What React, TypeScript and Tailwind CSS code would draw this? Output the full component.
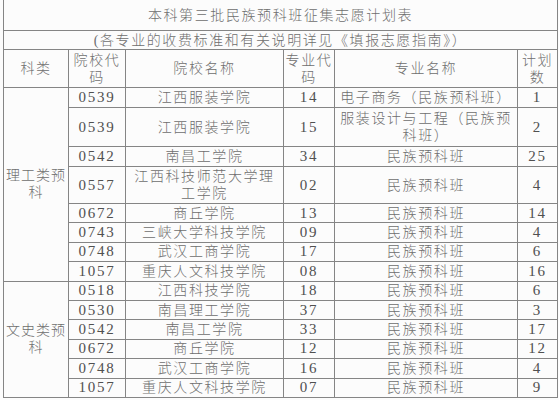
import React from "react";

type Row = { code: string; school: React.ReactNode; major: string; name: React.ReactNode; n: string; h: string };

const rows: Row[] = [
  { code: "0539", school: "江西服装学院", major: "14", name: "电子商务（民族预科班）", n: "1", h: "h-[20px]" },
  { code: "0539", school: "江西服装学院", major: "15", name: <>服装设计与工程（民族预<br />科班）</>, n: "2", h: "h-[39px]" },
  { code: "0542", school: "南昌工学院", major: "34", name: "民族预科班", n: "25", h: "h-[20px]" },
  { code: "0557", school: <>江西科技师范大学理<br />工学院</>, major: "02", name: "民族预科班", n: "4", h: "h-[37px]" },
  { code: "0672", school: "商丘学院", major: "13", name: "民族预科班", n: "14", h: "h-[19.4px]" },
  { code: "0743", school: "三峡大学科技学院", major: "09", name: "民族预科班", n: "4", h: "h-[19.4px]" },
  { code: "0748", school: "武汉工商学院", major: "17", name: "民族预科班", n: "6", h: "h-[19.4px]" },
  { code: "1057", school: "重庆人文科技学院", major: "08", name: "民族预科班", n: "16", h: "h-[19.4px]" },
  { code: "0518", school: "江西科技学院", major: "18", name: "民族预科班", n: "6", h: "h-[19.4px]" },
  { code: "0530", school: "南昌理工学院", major: "37", name: "民族预科班", n: "3", h: "h-[19.4px]" },
  { code: "0542", school: "南昌工学院", major: "33", name: "民族预科班", n: "17", h: "h-[19.4px]" },
  { code: "0672", school: "商丘学院", major: "12", name: "民族预科班", n: "12", h: "h-[19.4px]" },
  { code: "0748", school: "武汉工商学院", major: "16", name: "民族预科班", n: "4", h: "h-[19.4px]" },
  { code: "1057", school: "重庆人文科技学院", major: "07", name: "民族预科班", n: "9", h: "h-[19.4px]" },
];

const cell = "border border-[#858585] p-0 text-center align-middle leading-[17px] whitespace-nowrap";
const zh = "text-[14px] tracking-[1.6px] font-light text-[#6e6e6e]";
const num = "text-[15px] tracking-[1.8px] text-[#505050]";

export default function App() {
  return (
    <div className="w-[559px] h-[400px] bg-[#fcfcfc] overflow-hidden [font-family:'Liberation_Serif','Noto_Sans_CJK_SC',serif]">
      <table className="ml-[3px] mt-[-1px] w-[554px] table-fixed border-collapse border-[1.5px] border-[#7a7a7a]">
        <colgroup>
          <col className="w-[65px]" />
          <col className="w-[57px]" />
          <col className="w-[158px]" />
          <col className="w-[51px]" />
          <col className="w-[183px]" />
          <col className="w-[40px]" />
        </colgroup>
        <tbody>
          <tr className="h-[31px]">
            <td colSpan={6} className={`${cell} ${zh}`}>本科第三批民族预科班征集志愿计划表</td>
          </tr>
          <tr className="h-[19px]">
            <td colSpan={6} className={`${cell} ${zh}`}>(各专业的收费标准和有关说明详见《填报志愿指南》）</td>
          </tr>
          <tr className="h-[38px]">
            <td className={`${cell} ${zh}`}>科类</td>
            <td className={`${cell} ${zh}`}>院校代<br />码</td>
            <td className={`${cell} ${zh}`}>院校名称</td>
            <td className={`${cell} ${zh}`}>专业代<br />码</td>
            <td className={`${cell} ${zh}`}>专业名称</td>
            <td className={`${cell} ${zh}`}>计划<br />数</td>
          </tr>
          {rows.map((r, i) => (
            <tr key={i} className={r.h}>
              {i === 0 && (
                <td rowSpan={8} className={`${cell} ${zh} tracking-[1px]`}>理工类预<br />科</td>
              )}
              {i === 8 && (
                <td rowSpan={6} className={`${cell} ${zh} tracking-[1px]`}>文史类预<br />科</td>
              )}
              <td className={`${cell} ${num}`}>{r.code}</td>
              <td className={`${cell} ${zh}`}>{r.school}</td>
              <td className={`${cell} ${num}`}>{r.major}</td>
              <td className={`${cell} ${zh}`}>{r.name}</td>
              <td className={`${cell} ${num}`}>{r.n}</td>
            </tr>
          ))}
        </tbody>
      </table>
    </div>
  );
}
